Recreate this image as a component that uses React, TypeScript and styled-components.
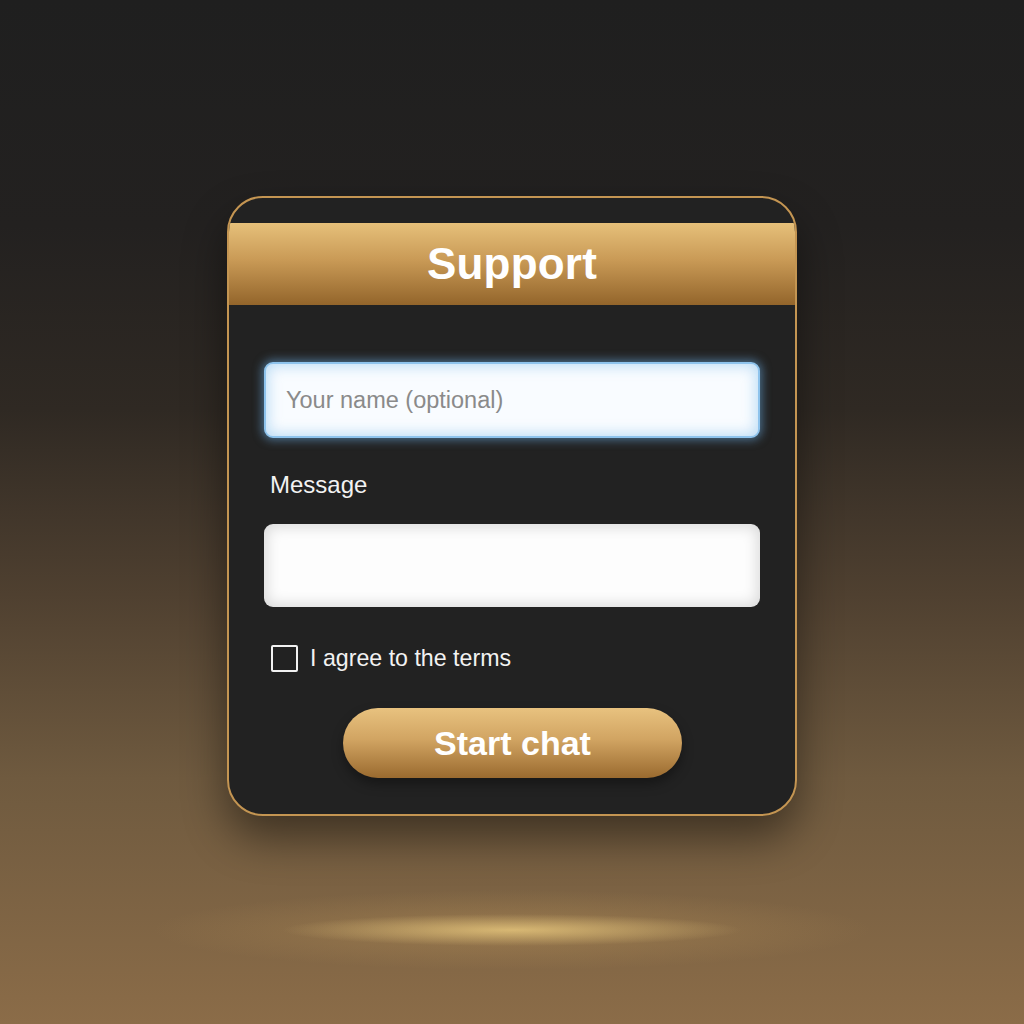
import styled, { createGlobalStyle } from "styled-components";

const GlobalStyle = createGlobalStyle`
  html, body {
    margin: 0;
    padding: 0;
  }
  body {
    font-family: "Liberation Sans", Arial, sans-serif;
  }
`;

const Page = styled.div`
  width: 1024px;
  height: 1024px;
  box-sizing: border-box;
  padding-top: 196px;
  display: flex;
  justify-content: center;
  align-items: flex-start;
  background:
    radial-gradient(ellipse 230px 16px at 512px 930px, rgba(236, 204, 128, 0.75), rgba(236, 204, 128, 0) 100%),
    radial-gradient(ellipse 360px 40px at 512px 930px, rgba(200, 160, 95, 0.35), rgba(200, 160, 95, 0) 100%),
    linear-gradient(180deg, #1f1f1f 0%, #232120 22%, #2f2923 40%, #4f4030 58%, #6f5a3f 76%, #8b6c48 100%);
`;

const Card = styled.div`
  width: 570px;
  height: 620px;
  box-sizing: border-box;
  border: 2px solid #c49552;
  border-radius: 36px;
  background: #222222;
  overflow: hidden;
  padding-top: 25px;
  display: flex;
  flex-direction: column;
  box-shadow: 0 22px 44px rgba(0, 0, 0, 0.45);
`;

const Header = styled.div`
  height: 82px;
  display: flex;
  align-items: center;
  justify-content: center;
  background: linear-gradient(180deg, #e6c07a 0%, #c99a56 45%, #93652b 100%);
  color: #ffffff;
  font-size: 44px;
  font-weight: 700;
  letter-spacing: 0.2px;
`;

const Body = styled.div`
  flex: 1;
  padding: 57px 35px 0;
  display: flex;
  flex-direction: column;
`;

const NameInput = styled.input`
  height: 76px;
  box-sizing: border-box;
  width: 100%;
  border: 2px solid #8ec3ec;
  border-radius: 9px;
  padding: 0 20px;
  font-family: "Liberation Sans", Arial, sans-serif;
  font-size: 23.5px;
  color: #333;
  background: #f9fcff;
  box-shadow:
    0 0 10px 2px rgba(110, 175, 230, 0.55),
    inset 0 0 14px 2px rgba(160, 205, 240, 0.7);
  outline: none;

  &::placeholder {
    color: #8a8a8a;
  }
`;

const Label = styled.div`
  margin-top: 34px;
  padding-left: 6px;
  line-height: 26px;
  color: #f2f2f2;
  font-size: 24px;
`;

const MessageInput = styled.textarea`
  margin-top: 26px;
  height: 83px;
  box-sizing: border-box;
  width: 100%;
  resize: none;
  border: none;
  border-radius: 9px;
  padding: 14px 20px;
  font-family: "Liberation Sans", Arial, sans-serif;
  font-size: 20px;
  background: #fdfdfd;
  box-shadow: inset 0 0 14px 3px rgba(0, 0, 0, 0.14);
  outline: none;
`;

const CheckRow = styled.label`
  margin-top: 38px;
  padding-left: 7px;
  display: flex;
  align-items: center;
  gap: 12px;
  color: #f2f2f2;
  font-size: 23.2px;
  line-height: 27px;
`;

const Box = styled.span`
  width: 27px;
  height: 27px;
  box-sizing: border-box;
  border: 2.5px solid #f2f2f2;
  border-radius: 2px;
  flex-shrink: 0;
`;

const ButtonRow = styled.div`
  margin-top: 36px;
  display: flex;
  justify-content: center;
  padding-left: 1px;
`;

const StartButton = styled.button`
  width: 339px;
  height: 70px;
  border: none;
  border-radius: 35px;
  background: linear-gradient(180deg, #e8c27f 0%, #d1a462 45%, #9a6a2f 100%);
  color: #ffffff;
  font-family: "Liberation Sans", Arial, sans-serif;
  font-size: 34px;
  font-weight: 700;
  box-shadow: 0 6px 12px rgba(0, 0, 0, 0.35);
  cursor: pointer;
`;

export default function App() {
  return (
    <Page>
      <GlobalStyle />
      <Card>
        <Header>Support</Header>
        <Body>
          <NameInput placeholder="Your name (optional)" />
          <Label>Message</Label>
          <MessageInput />
          <CheckRow>
            <Box />
            I agree to the terms
          </CheckRow>
          <ButtonRow>
            <StartButton>Start chat</StartButton>
          </ButtonRow>
        </Body>
      </Card>
    </Page>
  );
}
